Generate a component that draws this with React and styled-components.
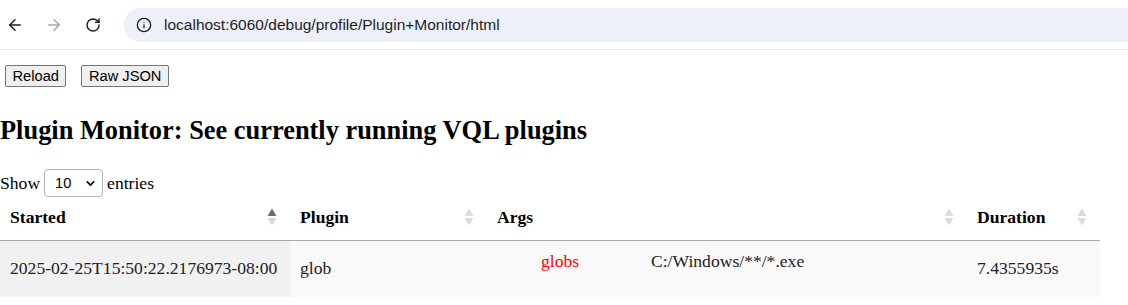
import React from 'react';
import styled, { createGlobalStyle } from 'styled-components';
import { ArrowLeft, ArrowRight, RotateCw, Info, ChevronDown } from 'lucide-react';

const GlobalStyle = createGlobalStyle`
  html, body {
    margin: 0;
    padding: 0;
    background: #fff;
  }
  body {
    font-family: "Liberation Serif", "Times New Roman", serif;
    font-size: 17.6px;
    color: #000;
  }
`;

const Chrome = styled.div`
  display: flex;
  align-items: center;
  height: 50px;
  border-bottom: 1px solid #e3e3e3;
  background: #fff;
  box-sizing: border-box;
`;

const NavButton = styled.div`
  width: 38px;
  height: 34px;
  display: flex;
  align-items: center;
  justify-content: center;
  color: ${(p) => (p.$disabled ? '#a6a6a6' : '#1f1f1f')};
  margin-left: ${(p) => (p.$first ? '-4px' : '1px')};
`;

const UrlBar = styled.div`
  flex: 1;
  display: flex;
  align-items: center;
  height: 34px;
  margin-left: 12px;
  margin-right: -30px;
  border-radius: 17px;
  background: #edf0f9;
  padding-left: 12px;
  color: #1f1f1f;
`;

const UrlText = styled.span`
  margin-left: 12px;
  font-family: "Liberation Sans", Arial, sans-serif;
  font-size: 15.5px;
`;

const Page = styled.div`
  padding: 0;
`;

const ButtonBar = styled.div`
  display: flex;
  gap: 15px;
  padding: 15px 5px 0;
`;

const Button = styled.button`
  height: 22px;
  padding: 0 6.5px;
  font-family: "Liberation Sans", Arial, sans-serif;
  font-size: 14.67px;
  color: #000;
  background: #efefef;
  border: 1px solid #767676;
  border-radius: 2px;
`;

const Heading = styled.h2`
  margin: 28px 0 0;
  font-size: 26.4px;
  font-weight: bold;
`;

const LengthRow = styled.div`
  display: flex;
  align-items: center;
  gap: 4px;
  margin-top: 22px;
  height: 30px;
`;

const SelectWrap = styled.div`
  position: relative;
  width: 59px;
  height: 28px;
`;

const Select = styled.select`
  appearance: none;
  width: 100%;
  height: 100%;
  padding: 0 0 0 10px;
  border: 1px solid #b4b4b4;
  border-radius: 4px;
  background: #fff;
  font-family: "Liberation Sans", Arial, sans-serif;
  font-size: 14.67px;
  color: #000;
`;

const Chevron = styled(ChevronDown)`
  position: absolute;
  right: 6px;
  top: 8px;
  pointer-events: none;
`;

const Table = styled.table`
  width: 1100px;
  margin-top: 1px;
  border-collapse: collapse;
  table-layout: fixed;
`;

const Th = styled.th`
  position: relative;
  box-sizing: border-box;
  width: ${(p) => p.$w}px;
  text-align: left;
  font-weight: bold;
  padding: 8px 18px 12px 10px;
  height: 40px;
  border-bottom: 1px solid #aaa;
`;

const SortIcon = styled.svg`
  position: absolute;
  right: 13px;
  top: 8px;
`;

const Td = styled.td`
  box-sizing: border-box;
  height: 56px;
  padding: 8px 10px;
  color: #222;
  vertical-align: middle;
  white-space: nowrap;
  background: ${(p) => (p.$sorted ? '#f1f1f1' : '#f9f9f9')};
`;

const ArgsCell = styled(Td)`
  vertical-align: top;
`;

const ArgsGrid = styled.div`
  display: grid;
  grid-template-columns: 154px 1fr;
  padding-top: 2px;
`;

const ArgKey = styled.div`
  padding-left: 44px;
  color: #f00;
`;

const ArgValue = styled.div`
  color: #222;
`;

const Sort = ({ active }) => (
  <SortIcon width="10" height="20" viewBox="0 0 10 20">
    <polygon points="0.5,9 5,1.5 9.5,9" fill={active ? '#6b6b6b' : '#dcdcdc'} />
    <polygon points="0.5,11 9.5,11 5,18.5" fill={active ? '#d6d6d6' : '#dcdcdc'} />
  </SortIcon>
);

const columns = [
  { name: 'Started', w: 290, active: true },
  { name: 'Plugin', w: 197 },
  { name: 'Args', w: 480 },
  { name: 'Duration', w: 133 },
];

export default function App() {
  return (
    <>
      <GlobalStyle />
      <Chrome>
        <NavButton $first>
          <ArrowLeft size={18} strokeWidth={2} />
        </NavButton>
        <NavButton $disabled>
          <ArrowRight size={18} strokeWidth={2} />
        </NavButton>
        <NavButton>
          <RotateCw size={16} strokeWidth={2.2} />
        </NavButton>
        <UrlBar>
          <Info size={16} strokeWidth={2} />
          <UrlText>localhost:6060/debug/profile/Plugin+Monitor/html</UrlText>
        </UrlBar>
      </Chrome>
      <Page>
        <ButtonBar>
          <Button>Reload</Button>
          <Button>Raw JSON</Button>
        </ButtonBar>
        <Heading>Plugin Monitor: See currently running VQL plugins</Heading>
        <LengthRow>
          <span>Show</span>
          <SelectWrap>
            <Select defaultValue="10">
              <option value="10">10</option>
              <option value="25">25</option>
              <option value="50">50</option>
              <option value="100">100</option>
            </Select>
            <Chevron size={13} strokeWidth={3} />
          </SelectWrap>
          <span>entries</span>
        </LengthRow>
        <Table>
          <thead>
            <tr>
              {columns.map((c) => (
                <Th key={c.name} $w={c.w}>
                  {c.name}
                  <Sort active={c.active} />
                </Th>
              ))}
            </tr>
          </thead>
          <tbody>
            <tr>
              <Td $sorted>2025-02-25T15:50:22.2176973-08:00</Td>
              <Td>glob</Td>
              <ArgsCell>
                <ArgsGrid>
                  <ArgKey>globs</ArgKey>
                  <ArgValue>C:/Windows/**/*.exe</ArgValue>
                </ArgsGrid>
              </ArgsCell>
              <Td>7.4355935s</Td>
            </tr>
          </tbody>
        </Table>
      </Page>
    </>
  );
}
